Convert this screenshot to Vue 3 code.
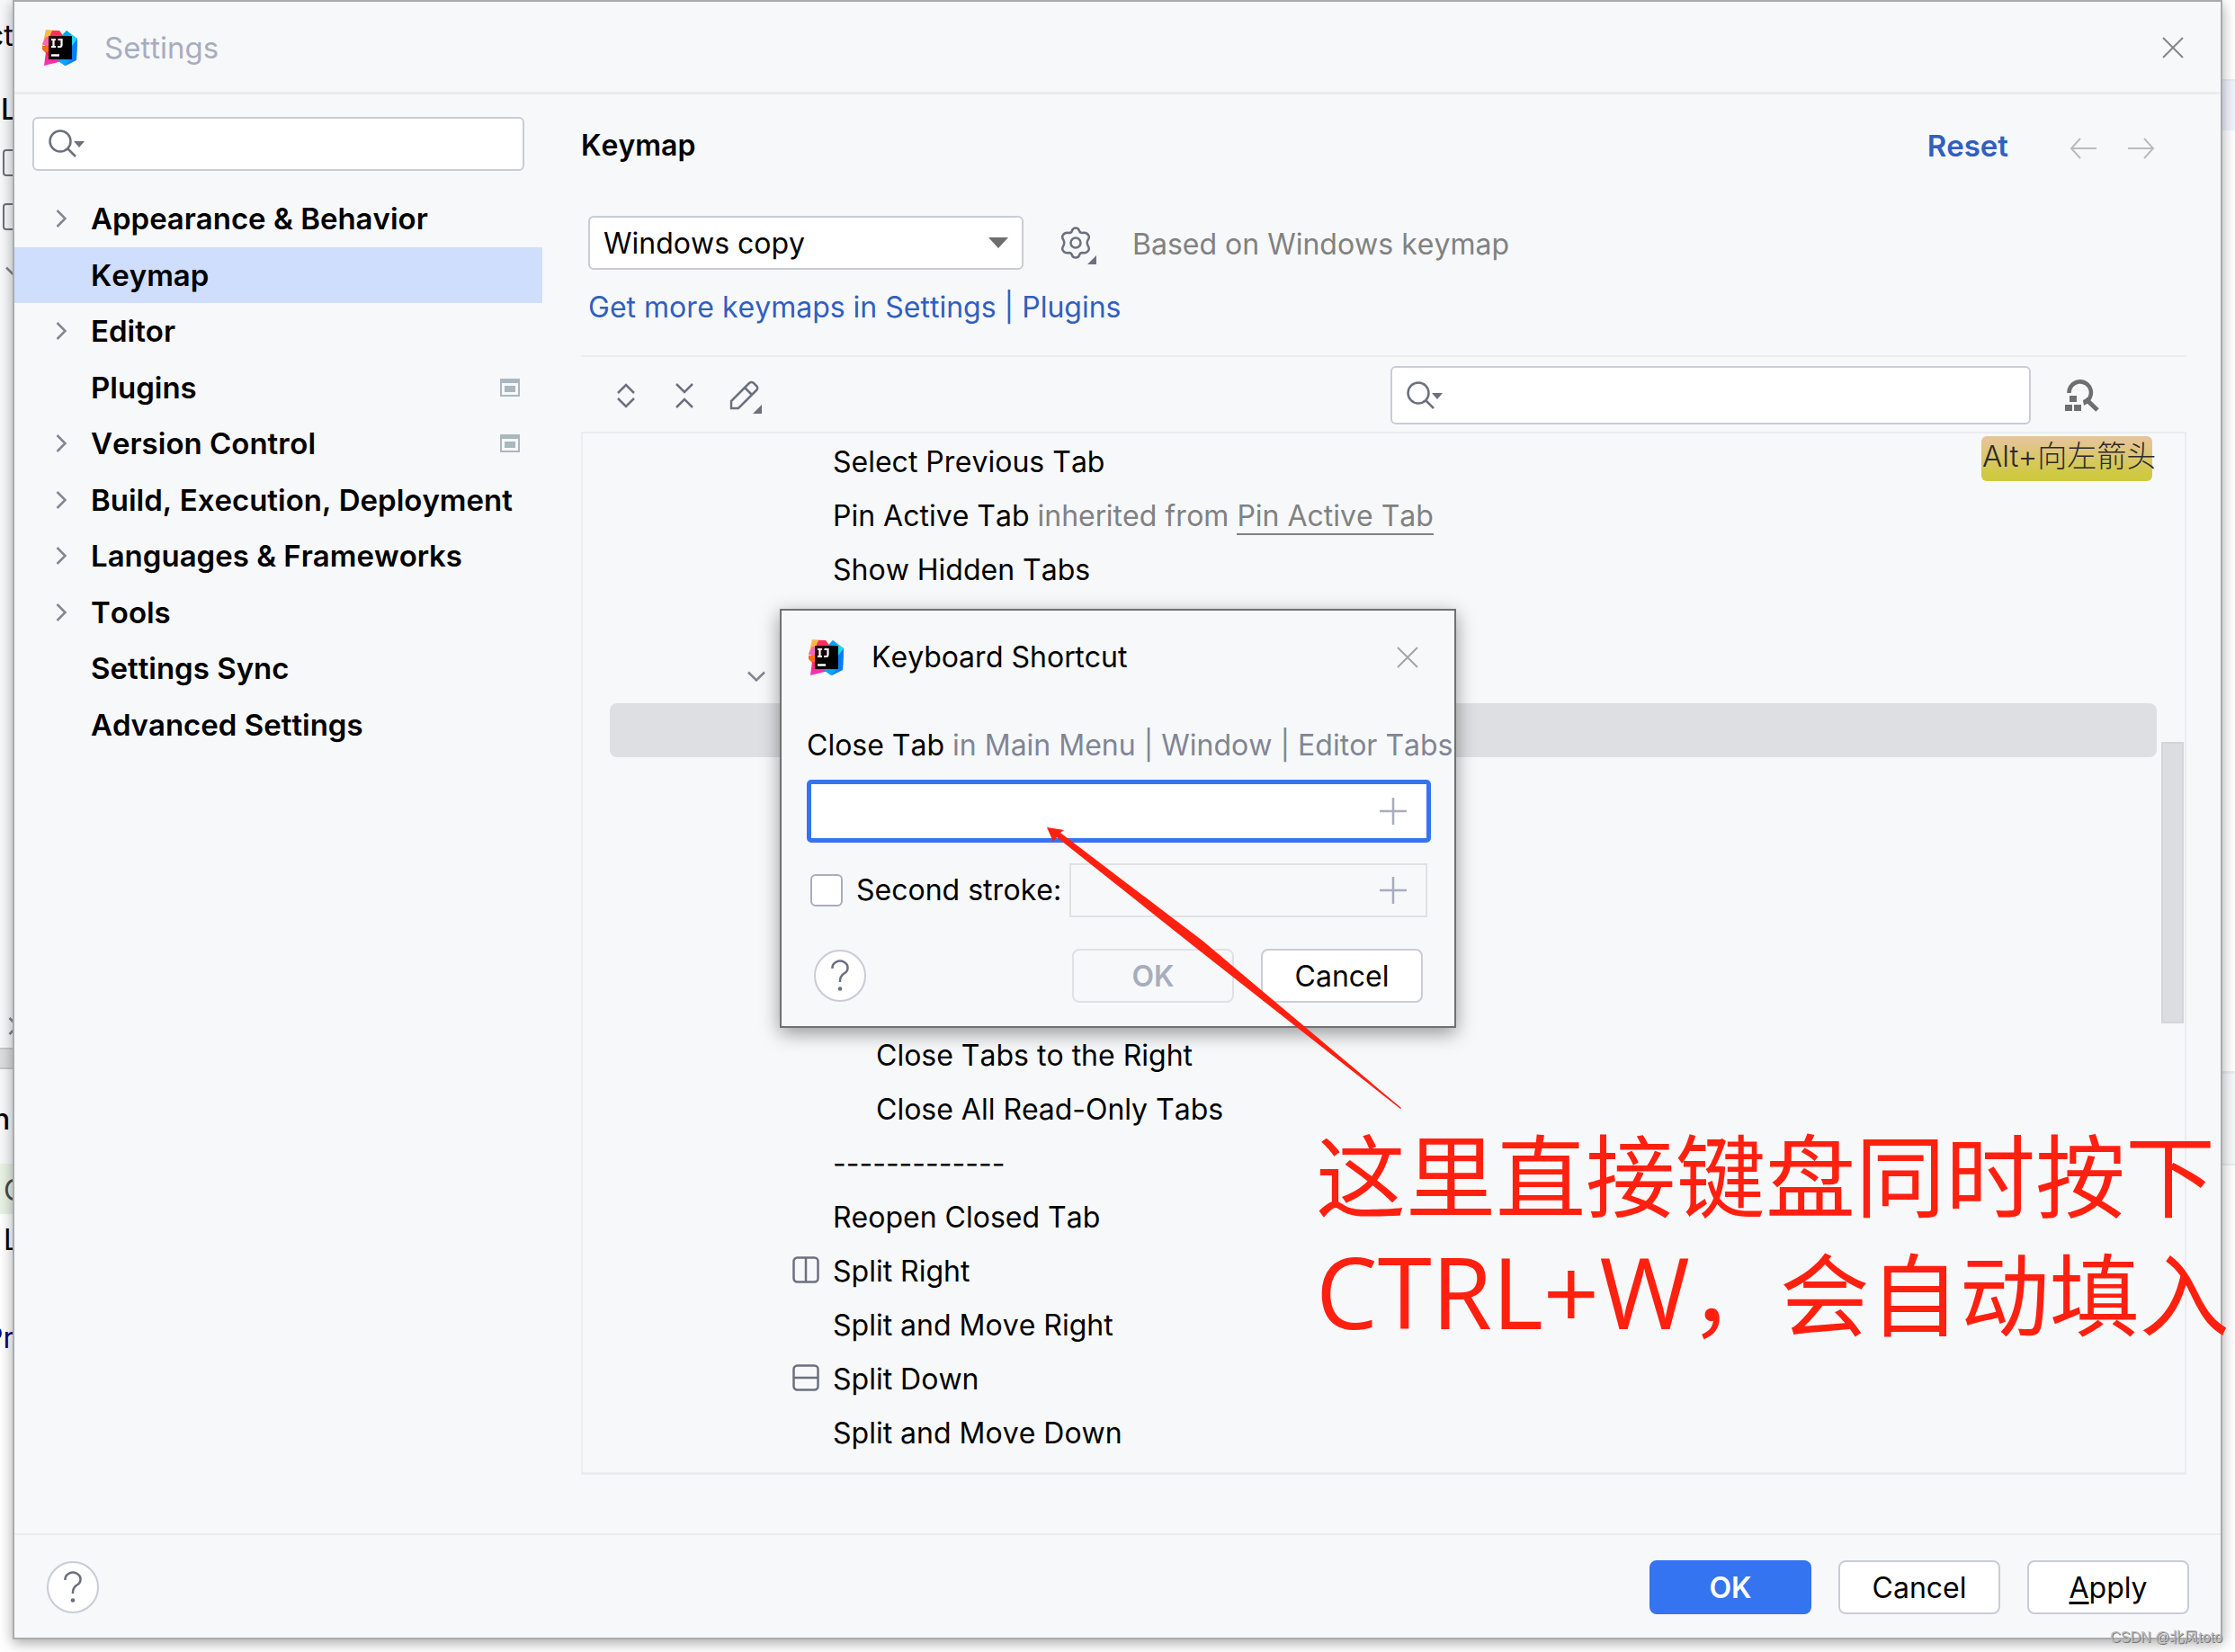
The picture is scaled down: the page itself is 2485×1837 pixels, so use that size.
<script setup>
import { ref } from 'vue'

const categories = [
  { label: 'Appearance & Behavior', expandable: true },
  { label: 'Keymap', selected: true },
  { label: 'Editor', expandable: true },
  { label: 'Plugins', project: true },
  { label: 'Version Control', expandable: true, project: true },
  { label: 'Build, Execution, Deployment', expandable: true },
  { label: 'Languages & Frameworks', expandable: true },
  { label: 'Tools', expandable: true },
  { label: 'Settings Sync' },
  { label: 'Advanced Settings' },
]

const actions = [
  { label: 'Select Previous Tab', shortcut: 'Alt+向左箭头' },
  { label: 'Pin Active Tab', inherited: 'Pin Active Tab' },
  { label: 'Show Hidden Tabs' },
  {},
  { group: true },
  { selected: true },
  {},
  {},
  {},
  {},
  {},
  { label: 'Close Tabs to the Right', nested: true },
  { label: 'Close All Read-Only Tabs', nested: true },
  { label: '-------------' },
  { label: 'Reopen Closed Tab' },
  { label: 'Split Right', icon: 'right' },
  { label: 'Split and Move Right' },
  { label: 'Split Down', icon: 'down' },
  { label: 'Split and Move Down' },
]

const keymap = ref('Windows copy')
const filter = ref('')
const actionFilter = ref('')
const firstStroke = ref('')
const useSecond = ref(false)
</script>

<template>
  <div class="desktop">
    <svg width="0" height="0" class="defs" aria-hidden="true">
      <defs>
        <linearGradient id="lg-dark" x1="0" y1="0" x2="1" y2="1">
          <stop offset="0" stop-color="#3a0a16" />
          <stop offset="0.5" stop-color="#000" />
        </linearGradient>
        <linearGradient id="lg-blue" x1="0" y1="0" x2="0" y2="1">
          <stop offset="0" stop-color="#00c8f5" />
          <stop offset="1" stop-color="#1476f2" />
        </linearGradient>
        <linearGradient id="lg-pink" x1="0" y1="0" x2="0" y2="1">
          <stop offset="0" stop-color="#ff2d55" />
          <stop offset="1" stop-color="#f531c8" />
        </linearGradient>
        <symbol id="logo" viewBox="0 0 40 40">
          <path d="M20 8 27 1l12 9-1 24-12 6-10-6z" fill="url(#lg-blue)" />
          <path d="M27 1l5 4-5 4-5-2z" fill="#00a6f0" />
          <path d="M39 10l-6-3v26l5 1z" fill="#087cfa" />
          <path d="M32 5l7 5-6 8z" fill="#22d4f4" />
          <path d="M4 0l15 1 5 7-12 4-12 6z" fill="#fdb84a" />
          <path d="M11 1h8l5 7H8z" fill="#fe315d" />
          <path d="M4 8L0 16l7 4 1-12z" fill="#f765b4" />
          <path d="M0 18h8v9l-4-1-4-4z" fill="#ff6a1a" />
          <path d="M4 25h11l7 10-20 5z" fill="url(#lg-pink)" />
          <path d="M17 34l6-1 8 1-6 6z" fill="#0aa5fb" />
          <rect x="7" y="7" width="26" height="26" fill="url(#lg-dark)" />
          <path d="M10 11h5M12.500 11v8M10 19h5M17.500 11h4v6q0 2-2 2h-2.500" fill="none" stroke="#fff" stroke-width="2.200" />
          <path d="M10 28.500h9" stroke="#fff" stroke-width="2.500" />
        </symbol>
        <symbol id="search" viewBox="0 0 40 32">
          <circle cx="13" cy="13" r="11.500" fill="none" stroke="#6c707e" stroke-width="2.500" />
          <path d="M21 21l9 9" stroke="#6c707e" stroke-width="2.500" />
          <path d="M28 13h12l-6 7z" fill="#6c707e" />
        </symbol>
        <symbol id="chevron" viewBox="0 0 12 20">
          <path d="M1.500 1l9 9-9 9" fill="none" stroke="#818594" stroke-width="2.500" />
        </symbol>
        <symbol id="plus" viewBox="0 0 30 30">
          <path d="M15 0v30M0 15h30" stroke="#a8adbd" stroke-width="2.500" />
        </symbol>
        <symbol id="close" viewBox="0 0 24 24">
          <path d="M1 1l22 22M23 1L1 23" stroke="currentColor" stroke-width="2" />
        </symbol>
        <symbol id="help" viewBox="0 0 20 36">
          <path d="M1.500 10V9a8.500 7.500 0 1 1 13 6.500Q10 18.500 10 24v1" fill="none" stroke="#6c707e" stroke-width="2.500" />
          <circle cx="10" cy="32.500" r="2.300" fill="#6c707e" />
        </symbol>
      </defs>
    </svg>

    <div class="ide" aria-hidden="true">
      <div class="ide-left">
        <span class="frag l1">ct</span>
        <span class="frag l2">L</span>
        <i class="box b1"></i>
        <i class="box b2"></i>
        <svg class="chev down c1" width="12" height="20"><use href="#chevron" /></svg>
        <svg class="chev c2" width="12" height="20"><use href="#chevron" /></svg>
        <i class="band"></i>
        <span class="frag l3">n</span>
        <i class="green"></i>
        <span class="frag l4">C</span>
        <span class="frag l5">L</span>
        <span class="frag l6">Pr</span>
      </div>
      <div class="ide-right">
        <i class="tabs"></i>
        <i class="strip"></i>
      </div>
    </div>

    <main class="window">
      <header class="titlebar">
        <svg width="40" height="40"><use href="#logo" /></svg>
        <span class="window-title">Settings</span>
        <button class="icon-btn close" aria-label="Close"><svg width="24" height="24"><use href="#close" /></svg></button>
      </header>

      <div class="body">
        <nav class="sidebar">
          <label class="search-box">
            <svg width="40" height="32"><use href="#search" /></svg>
            <input v-model="filter" type="text" aria-label="Search settings" />
          </label>
          <ul class="categories">
            <li v-for="c in categories" :key="c.label" :class="{ selected: c.selected }">
              <svg v-if="c.expandable" class="exp" width="12" height="20"><use href="#chevron" /></svg>
              <span class="cat-label">{{ c.label }}</span>
              <svg v-if="c.project" class="proj" width="22" height="20" viewBox="0 0 22 20">
                <path d="M0 0h22v20H0zM2 5v13h18V5z" fill="#aab7bf" fill-rule="evenodd" />
                <path d="M5 8h12v7H5z" fill="#aab7bf" />
              </svg>
            </li>
          </ul>
        </nav>

        <section class="content">
          <div class="head">
            <h1>Keymap</h1>
            <a href="#" class="reset">Reset</a>
            <button class="icon-btn" aria-label="Back">
              <svg width="30" height="24" viewBox="0 0 30 24"><path d="M12 1L2 12l10 11M2 12h28" fill="none" stroke="#bbb" stroke-width="2" /></svg>
            </button>
            <button class="icon-btn" aria-label="Forward">
              <svg width="30" height="24" viewBox="0 0 30 24"><path d="M18 1l10 11-10 11M28 12H0" fill="none" stroke="#bbb" stroke-width="2" /></svg>
            </button>
          </div>

          <div class="scheme">
            <div class="select-wrap">
              <select v-model="keymap" aria-label="Keymap scheme">
                <option>Windows copy</option>
              </select>
              <svg class="caret" width="22" height="12" viewBox="0 0 22 12"><path d="M0 0h22L11 12z" fill="#6e6e6e" /></svg>
            </div>
            <button class="icon-btn gear" aria-label="Scheme actions">
              <svg width="42" height="44" viewBox="0 0 42 44">
                <path d="M14 4.500q1-3 4-3t4 3q.5 2.500 3.500 2.500 5-1 7 3 1 2-1 5-1.500 3 0 6 2 3 1 5-2 4-7 3-3 0-3.500 3-1 2.500-4 2.500t-4-2.500q-.5-3-3.500-3-5 1-7-3-1-2 1-5 1.500-3 0-6-2-3-1-5 2-4 7-3 3 0 3.500-2.500z" fill="none" stroke="#6c707e" stroke-width="2.500" />
                <circle cx="18" cy="18" r="5.500" fill="none" stroke="#6c707e" stroke-width="2.500" />
                <path d="M41 32v10H31z" fill="#6c707e" />
              </svg>
            </button>
            <span class="based">Based on Windows keymap</span>
          </div>
          <a href="#" class="more">Get more keymaps in Settings | Plugins</a>

          <div class="toolbar">
            <button class="icon-btn" aria-label="Expand all">
              <svg width="20" height="28" viewBox="0 0 20 28"><path d="M1 11l9-9 9 9M1 17l9 9 9-9" fill="none" stroke="#6c707e" stroke-width="2.500" /></svg>
            </button>
            <button class="icon-btn" aria-label="Collapse all">
              <svg width="20" height="28" viewBox="0 0 20 28"><path d="M1 1l9 9 9-9M1 27l9-9 9 9" fill="none" stroke="#6c707e" stroke-width="2.500" /></svg>
            </button>
            <button class="icon-btn pencil" aria-label="Edit shortcut">
              <svg width="36" height="38" viewBox="0 0 36 38">
                <path d="M2 31v-8L22 3q2.500-2 5 0l3 3q2.500 2.500 0 5L10 31zM17 8l8 8" fill="none" stroke="#6c707e" stroke-width="2.500" />
                <path d="M36 27v10H26z" fill="#6c707e" />
              </svg>
            </button>
            <label class="search-box actions-search">
              <svg width="40" height="32"><use href="#search" /></svg>
              <input v-model="actionFilter" type="text" aria-label="Search actions" />
            </label>
            <button class="icon-btn find" aria-label="Find actions by shortcut">
              <svg width="38" height="36" viewBox="0 0 38 36">
                <path d="M4.500 15a12.200 12.200 0 1 1 16.500 11" fill="none" stroke="#6e6e6e" stroke-width="4.500" />
                <path d="M23 21.500l13 12.500" stroke="#6e6e6e" stroke-width="5" />
                <path d="M20 23l4-2 3 4-6 4z" fill="#6e6e6e" />
                <path d="M5 18h8v7H5zM0 28h8v7H0zM10 28h8v7h-8z" fill="#6e6e6e" />
              </svg>
            </button>
          </div>

          <div class="tree">
            <ul>
              <li v-for="(a, i) in actions" :key="i" :class="{ picked: a.selected, nested: a.nested }">
                <svg v-if="a.group" class="chev down group" width="12" height="20"><use href="#chevron" /></svg>
                <svg v-if="a.icon" class="split" width="30" height="30" viewBox="0 0 30 30">
                  <rect x="1.500" y="1.500" width="27" height="27" rx="4" fill="none" stroke="#6c707e" stroke-width="2.500" />
                  <path :d="a.icon === 'right' ? 'M15 1v28' : 'M1 15h28'" stroke="#6c707e" stroke-width="2.500" />
                </svg>
                <span v-if="a.label" class="action">{{ a.label }}<span v-if="a.inherited" class="inherit"> inherited from <a href="#">{{ a.inherited }}</a></span></span>
                <kbd v-if="a.shortcut">{{ a.shortcut }}</kbd>
              </li>
            </ul>
            <i class="scrollbar"></i>
          </div>
        </section>
      </div>

      <footer class="footer">
        <button class="help" aria-label="Help"><svg width="20" height="36"><use href="#help" /></svg></button>
        <button class="btn primary">OK</button>
        <button class="btn">Cancel</button>
        <button class="btn"><u>A</u>pply</button>
      </footer>
    </main>

    <div class="dialog" role="dialog" aria-label="Keyboard Shortcut">
      <header class="dialog-title">
        <svg width="40" height="40"><use href="#logo" /></svg>
        <span>Keyboard Shortcut</span>
        <button class="icon-btn close" aria-label="Close"><svg width="24" height="24"><use href="#close" /></svg></button>
      </header>
      <p class="path">Close Tab <span>in Main Menu | Window | Editor Tabs</span></p>
      <div class="stroke focused">
        <input v-model="firstStroke" type="text" aria-label="First stroke" />
        <svg width="30" height="30"><use href="#plus" /></svg>
      </div>
      <div class="second">
        <input id="second" v-model="useSecond" type="checkbox" />
        <label for="second">Second stroke:</label>
        <div class="stroke disabled">
          <input type="text" disabled aria-label="Second stroke keys" />
          <svg width="30" height="30"><use href="#plus" /></svg>
        </div>
      </div>
      <div class="dialog-actions">
        <button class="help" aria-label="Help"><svg width="20" height="36"><use href="#help" /></svg></button>
        <button class="btn" disabled>OK</button>
        <button class="btn">Cancel</button>
      </div>
    </div>

    <svg class="arrow" width="396" height="314" viewBox="0 0 396 314" aria-hidden="true">
      <path d="M0 0l19 3-4 3 158 120 221 186-1 1-226-178L11 11l-4 5z" fill="#ff2010" />
    </svg>
    <p class="note">这里直接键盘同时按下<br /><span>CTRL+W</span>，会自动填入</p>
    <span class="watermark">CSDN @北风toto</span>
  </div>
</template>

<style>
body {
  margin: 0;
  background: #fff;
}
</style>

<style scoped>
* {
  box-sizing: border-box;
}
.desktop {
  position: relative;
  min-height: 100vh;
  padding: 0 14px 14px;
  overflow: hidden;
  font: 400 32px/40px Inter, "Noto Sans CJK SC", sans-serif;
  font-kerning: none;
  color: #000;
}
.defs {
  position: absolute;
}
button,
input,
select {
  font: inherit;
  font-kerning: none;
  color: inherit;
}
ul {
  margin: 0;
  padding: 0;
  list-style: none;
}
svg {
  display: block;
  flex: none;
}
.icon-btn {
  display: flex;
  padding: 0;
  border: 0;
  background: none;
}

.ide-left,
.ide-right {
  position: absolute;
  top: 0;
  width: 20px;
  height: 100%;
  overflow: hidden;
}
.ide-left {
  left: 0;
  background: linear-gradient(#f7f8fa 1294px, #fff 1294px);
}
.ide-right {
  right: 0;
}
.ide-left > *,
.ide-right > * {
  position: absolute;
}
.l1 { top: 20px; left: -14px; }
.l2 { top: 102px; left: 1px; font-weight: 500; }
.l3 { top: 1225px; left: -8px; font-weight: 500; }
.l4 { top: 1304px; left: 4px; color: #4a4a4a; }
.l5 { top: 1359px; left: 4px; }
.l6 { top: 1468px; left: -17px; color: #000080; }
.box {
  left: 3px;
  width: 30px;
  height: 30px;
  border: 2px solid #6c707e;
  border-radius: 4px;
}
.b1 { top: 166px; }
.b2 { top: 226px; }
.c1 { top: 292px; left: 10px; }
.c2 { top: 1131px; left: 9px; }
.chev.down {
  transform: rotate(90deg);
}
.band {
  top: 1165px;
  width: 20px;
  height: 24px;
  background: #dcdcdc;
  border: solid #c8c8c8;
  border-width: 2px 0;
}
.green {
  top: 1294px;
  width: 20px;
  height: 56px;
  background: #e7f2e4;
}
.tabs {
  top: 88px;
  width: 20px;
  height: 57px;
  border-top: 2px solid #ebecf0;
  background: #eff3fc;
}
.strip {
  top: 1191px;
  width: 20px;
  height: 105px;
  border: solid #ebecf0;
  border-width: 3px 0 2px;
  background: #f7f8fa;
}

.window {
  position: relative;
  display: flex;
  flex-direction: column;
  min-height: calc(100vh - 14px);
  border: 2px solid #a9abae;
  background: #f7f8fa;
  box-shadow: 0 4px 14px rgba(0, 0, 0, 0.35);
}
.titlebar {
  display: flex;
  align-items: center;
  height: 103px;
  padding: 2px 41px 0 31px;
  border-bottom: 3px solid #ebecf0;
}
.window-title {
  margin-left: 29px;
  font-size: 33px;
  color: #a8adbd;
}
.close {
  margin-left: auto;
  color: #868686;
}
.body {
  display: flex;
  flex: 1;
}
.sidebar {
  flex: none;
  width: 587px;
  padding-top: 25px;
}
.search-box {
  display: flex;
  align-items: center;
  height: 60px;
  margin: 0 20px;
  padding-left: 16px;
  border: 2px solid #c9ccd6;
  border-radius: 6px;
  background: #fff;
}
.search-box input {
  flex: 1;
  min-width: 0;
  border: 0;
  background: none;
  outline: 0;
}
.categories {
  display: grid;
  grid-template-rows: repeat(10, 1fr);
  height: 625px;
  margin-top: 22px;
}
.categories li {
  display: flex;
  align-items: center;
  padding: 0 25px 0 85px;
  font-size: 33px;
  font-weight: 600;
  white-space: nowrap;
}
.categories .selected {
  background: #cfdefc;
}
.exp {
  margin: 0 27px 0 -39px;
}
.proj {
  margin-left: auto;
}

.content {
  flex: 1;
  min-width: 0;
  display: flex;
  flex-direction: column;
  padding: 36px 38px 65px 43px;
}
.head {
  display: flex;
  align-items: center;
  height: 42px;
  padding-right: 35px;
}
h1 {
  margin: 0 auto 0 0;
  font-size: 32px;
  font-weight: 600;
}
a {
  color: #315fbd;
  text-decoration: none;
}
.reset {
  margin-right: 33px;
  font-size: 33px;
  font-weight: 600;
}
.head .icon-btn {
  margin: 5px 0 0 35px;
}
.scheme {
  display: flex;
  align-items: center;
  height: 60px;
  margin-top: 57px;
  padding-left: 8px;
}
.select-wrap {
  position: relative;
  width: 484px;
}
select {
  width: 100%;
  height: 60px;
  padding: 2px 15px 0;
  border: 2px solid #c9ccd6;
  border-radius: 6px;
  background: #fff;
  appearance: none;
}
.caret {
  position: absolute;
  top: 24px;
  right: 17px;
}
.gear {
  margin: 8px 39px 0 40px;
}
.based {
  padding-top: 3px;
  color: #818181;
}
.more {
  align-self: flex-start;
  margin: 22px 0 33px 8px;
}
.toolbar {
  display: flex;
  align-items: center;
  height: 85px;
  padding: 2px 97px 0 40px;
  border-top: 2px solid #ebecf0;
}
.toolbar .icon-btn {
  margin-right: 45px;
}
.toolbar .pencil {
  margin: 5px 0 0 -5px;
}
.actions-search {
  width: 712px;
  height: 65px;
  margin: 0 38px 0 auto;
}
.toolbar .find {
  margin: 0;
}
.tree {
  position: relative;
  flex: 1;
  border: 2px solid #ebecf0;
  border-bottom-width: 3px;
}
.tree li {
  position: relative;
  display: flex;
  align-items: center;
  height: 60px;
  margin: 0 31px 0 30px;
  padding-left: 248px;
  border-radius: 8px;
  white-space: nowrap;
}
.tree .nested {
  padding-left: 296px;
}
.tree .picked {
  background: #dddfe2;
}
.action {
  padding-top: 3px;
}
.group {
  margin-left: -91px;
}
.split {
  margin: 0 15px 0 -45px;
}
.inherit,
.inherit a {
  color: #818181;
}
.inherit a {
  border-bottom: 2px solid #818181;
}
kbd {
  width: 190px;
  height: 50px;
  margin: 0 5px 4px auto;
  padding-left: 1px;
  border-radius: 6px;
  background: linear-gradient(#e8c4a0, #cfc942 85%);
  font: 300 33px/44px Inter, "Noto Sans CJK SC", sans-serif;
  color: #2b2b2b;
}
.scrollbar {
  position: absolute;
  top: 343px;
  right: 1px;
  width: 25px;
  height: 313px;
  border: 2px solid #d4d5d8;
  background: #dcdde0;
}

.footer {
  display: flex;
  align-items: center;
  gap: 30px;
  height: 116px;
  padding: 2px 35px 0 36px;
  border-top: 2px solid #ebecf0;
}
.help {
  display: flex;
  align-items: center;
  justify-content: center;
  width: 58px;
  height: 58px;
  margin-right: auto;
  padding: 0;
  border: 2px solid #c9ccd6;
  border-radius: 50%;
  background: #fff;
}
.btn {
  width: 180px;
  height: 60px;
  padding: 2px 0 0;
  border: 2px solid #c9ccd6;
  border-radius: 8px;
  background: #fff;
}
.btn.primary {
  border-color: #3574f0;
  background: #3574f0;
  color: #fff;
  font-weight: 600;
}
.btn:disabled {
  border-color: #dfe1e5;
  background: none;
  color: #a8adbd;
  font-weight: 600;
}
u {
  text-underline-offset: 4px;
}

.dialog {
  position: absolute;
  top: 677px;
  left: 867px;
  width: 752px;
  height: 466px;
  overflow: hidden;
  padding: 0 28px;
  border: 2px solid #6e7072;
  background: #f7f8fa;
  box-shadow: 0 6px 20px rgba(0, 0, 0, 0.4);
}
.dialog-title {
  display: flex;
  align-items: center;
  height: 104px;
  margin: 0 12px 0 2px;
}
.dialog-title span {
  margin-left: 30px;
}
.dialog-title .close {
  color: #a5a5a5;
}
.path {
  margin: 26px 0 18px;
  white-space: nowrap;
}
.path span {
  color: #818594;
}
.stroke {
  display: flex;
  align-items: center;
}
.stroke input {
  flex: 1;
  min-width: 0;
  height: 100%;
  padding: 0 10px;
  border: 0;
  background: none;
  outline: 0;
}
.focused {
  height: 70px;
  width: 694px;
  padding-right: 22px;
  border: 5px solid #3574f0;
  border-radius: 5px;
  background: #fff;
}
.second {
  display: flex;
  align-items: center;
  width: 690px;
  height: 60px;
  margin-top: 23px;
  padding-left: 4px;
  white-space: nowrap;
}
.second > input {
  flex: none;
  width: 36px;
  height: 36px;
  margin: 0 15px 0 0;
  border: 2px solid #a8adbd;
  border-radius: 6px;
  background: #fff;
  appearance: none;
}
.second label {
  width: 237px;
}
.disabled {
  flex: 1;
  min-width: 0;
  height: 60px;
  padding-right: 21px;
  border: 2px solid #dfe1e5;
}
.dialog-actions {
  display: flex;
  align-items: center;
  gap: 30px;
  margin-top: 35px;
  padding: 0 7px 0 8px;
}

.arrow {
  position: absolute;
  top: 920px;
  left: 1164px;
}
.note {
  position: absolute;
  top: 1237px;
  left: 1463px;
  margin: 0;
  font: 400 100px/132px "Noto Sans CJK SC", sans-serif;
  color: #ff2010;
  white-space: nowrap;
}
.note span {
  font-family: "Open Sans", sans-serif;
  font-size: 109px;
}
.watermark {
  position: absolute;
  right: 14px;
  bottom: 4px;
  font: 400 16px/24px "Liberation Sans", "Noto Sans CJK SC", sans-serif;
  color: #b9b9b9;
  text-shadow: 1px 1px 0 #777;
}
</style>
